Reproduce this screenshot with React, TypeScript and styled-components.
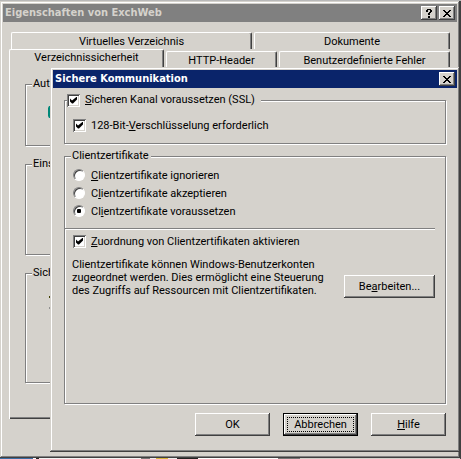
import React from "react";
import styled, { createGlobalStyle, css } from "styled-components";

const face = "#d5d2cc";
const shade = "#808080";
const dark = "#404040";

const raised = css`
  box-shadow: inset -1px -1px ${dark}, inset 1px 1px #fff, inset -2px -2px ${shade};
`;

const windowFrame = css`
  background: ${face};
  padding: 3px;
  box-shadow: inset -1px -1px ${dark}, inset 1px 1px ${face},
    inset -2px -2px ${shade}, inset 2px 2px #fff;
`;

const GlobalStyle = createGlobalStyle`
  *, *::before, *::after { box-sizing: border-box; }
  body { margin: 0; }
  body, button {
    font-family: Roboto, "DejaVu Sans Condensed", sans-serif;
    font-size: 11px;
    line-height: 13px;
    color: #000;
  }
`;

const Desktop = styled.div`
  position: relative;
  min-height: 100vh;
  display: flex;
  flex-direction: column;
  padding: 1px 1px 0 0;
  background: linear-gradient(to bottom, #b8b8b8 1px, ${dark} 1px);
`;

const Taskbar = styled.div`
  height: 1px;
  background: linear-gradient(
    to right,
    #3a6ea5 33px, #fff 33px 36px, #222 36px 39px, #f4f4f4 39px 141px,
    #777 141px 150px, #eee 150px 156px, #d8b53a 156px 168px, #eee 168px 177px,
    #222 177px 198px, #fff 198px 278px, #777 278px 300px, ${face} 300px
  );
`;

const PropertyWindow = styled.main`
  ${windowFrame}
  flex: 1;
  display: flex;
  flex-direction: column;
`;

const Dialog = styled.section`
  ${windowFrame}
  position: absolute;
  top: 67px;
  left: 50px;
  right: 1px;
  bottom: 7px;
  display: flex;
  flex-direction: column;
`;

const TitleBar = styled.header<{ $active?: boolean }>`
  height: 18px;
  flex: none;
  display: flex;
  align-items: center;
  gap: 2px;
  padding: 0 2px;
  background: ${(p) => (p.$active ? "#0a246a" : shade)};
  color: ${(p) => (p.$active ? "#fff" : face)};
`;

const Title = styled.h1`
  flex: 1;
  margin: 0;
  font: bold 11px/14px "DejaVu Sans Condensed", sans-serif;
`;

const CaptionButton = styled.button`
  ${raised}
  width: 16px;
  height: 14px;
  padding: 0;
  border: 0;
  background: ${face};
  display: grid;
  place-items: center;
`;

const TabRow = styled.div<{ $front?: boolean }>`
  display: grid;
  flex: none;
  gap: 2px;
  align-items: end;
  height: 18px;
  margin: ${(p) => (p.$front ? "0 7px 0 6px" : "9px 7px 0 8px")};
  grid-template-columns: ${(p) => (p.$front ? "155fr 111fr 171fr" : "241fr 196fr")};
`;

const Tab = styled.button<{ $selected?: boolean }>`
  height: ${(p) => (p.$selected ? 19 : 17)}px;
  padding: 0 0 ${(p) => (p.$selected ? 3 : 0)}px;
  border: 0;
  border-top: 1px solid #fff;
  border-left: 1px solid #fff;
  border-right: 1px solid ${dark};
  border-radius: 2px 2px 0 0;
  box-shadow: inset -1px 0 ${shade};
  background: ${face};
`;

const TabPanel = styled.div`
  flex: 1;
  display: flex;
  flex-direction: column;
  gap: 11px;
  margin: 0 7px 36px 6px;
  padding: 10px 16px 36px 15px;
  border-left: 1px solid #fff;
  box-shadow: inset -1px -1px ${dark}, inset -2px -2px ${shade};
`;

const GroupBox = styled.fieldset<{ $pad?: string; $grow?: boolean }>`
  display: flex;
  flex-direction: column;
  flex: ${(p) => (p.$grow ? "1 1 auto" : "none")};
  min-width: 0;
  margin: 0;
  padding: ${(p) => p.$pad ?? "0"};
  border: 1px solid ${shade};
  box-shadow: 1px 1px #fff, inset 1px 1px #fff;
`;

const Legend = styled.legend`
  height: 14px;
  line-height: 14px;
  margin-left: 6px;
  padding: 0 2px 0 1px;
  background: ${face};
`;

const CheckLegend = styled(Legend)`
  margin-left: 2px;
  padding: 0 6px 0 0;
`;

const SideContent = styled.div<{ $height: number }>`
  height: ${(p) => p.$height}px;
  padding: 15px 0 0 22px;
`;

const Choice = styled.label<{ $tall?: boolean }>`
  display: flex;
  align-items: center;
  gap: 5px;
  height: ${(p) => (p.$tall ? 18 : 14)}px;
`;

const CheckBox = styled.input.attrs({ type: "checkbox" })`
  appearance: none;
  width: 13px;
  height: 13px;
  margin: 0;
  display: grid;
  place-items: center;
  background: #fff;
  box-shadow: inset 1px 1px ${shade}, inset -1px -1px #fff,
    inset 2px 2px ${dark}, inset -2px -2px ${face};

  &:checked::after {
    content: "";
    width: 7px;
    height: 7px;
    background: #000;
    clip-path: polygon(0 2px, 2px 4px, 7px 0, 7px 3px, 3px 7px, 2px 7px, 0 5px);
  }
`;

const Radio = styled.input.attrs({ type: "radio" })`
  appearance: none;
  width: 12px;
  height: 12px;
  margin: 0 1px 0 0;
  display: grid;
  place-items: center;
  border: 1px solid;
  border-color: ${shade} #fff #fff ${shade};
  border-radius: 50%;
  background: #fff;
  box-shadow: inset 1px 1px ${dark};

  &:checked::after {
    content: "";
    width: 4px;
    height: 4px;
    border-radius: 1px;
    background: #000;
  }
`;

const DialogBody = styled.form`
  flex: 1;
  display: flex;
  flex-direction: column;
  gap: 5px;
  padding: 5px 11px 13px;
`;

const Divider = styled.hr`
  width: calc(100% - 2px);
  height: 2px;
  margin: 8px 0 4px;
  border: 0;
  border-top: 1px solid ${shade};
  border-bottom: 1px solid #fff;
`;

const Indent = styled.div`
  padding-left: 8px;
`;

const MappingRow = styled.div`
  display: flex;
  justify-content: space-between;
  align-items: flex-start;
  padding: 10px 2px 0 7px;
`;

const Description = styled.p`
  width: 260px;
  margin: 0;
`;

const PushButton = styled.button<{ $wide?: boolean; $default?: boolean }>`
  ${raised}
  width: ${(p) => (p.$wide ? 91 : 75)}px;
  height: 23px;
  padding: 0;
  border: 0;
  background: ${face};
  ${(p) =>
    p.$default &&
    css`
      display: flex;
      border: 1px solid #000;
      padding: 3px;
    `}
`;

const EditButton = styled(PushButton)`
  margin-top: 17px;
`;

const FocusFrame = styled.span`
  flex: 1;
  align-self: stretch;
  display: grid;
  place-items: center;
  border: 1px dotted #000;
`;

const Footer = styled.footer`
  display: flex;
  justify-content: flex-end;
  gap: 13px;
  padding-top: 4px;
`;

const Key = styled.span`
  text-decoration: underline;
  text-underline-offset: 1px;
  text-decoration-thickness: 1px;
`;

const CloseIcon = () => (
  <svg width="8" height="7" viewBox="0 0 8 7" shapeRendering="crispEdges" aria-hidden="true">
    <path d="M0 0h2v1h1v1h2v-1h1v-1h2v1h-1v1h-1v1h-1v1h1v1h1v1h1v1h-2v-1h-1v-1h-2v1h-1v1h-2v-1h1v-1h1v-1h1v-1h-1v-1h-1v-1h-1z" />
  </svg>
);

const HelpIcon = () => (
  <svg width="6" height="9" viewBox="0 0 6 9" shapeRendering="crispEdges" aria-hidden="true">
    <path d="M1 0h4v1h1v2h-1v1h-1v2h-2v-2h1v-1h1v-2h-2v2h-2v-2h1zM2 7h2v2h-2z" />
  </svg>
);

const AuthIcon = () => (
  <svg width="10" height="12" viewBox="0 0 10 12" aria-hidden="true">
    <path d="M1 0h9v12H1L0 10V2z" fill="#008878" />
  </svg>
);

const CertificateIcon = () => (
  <svg width="10" height="16" viewBox="0 0 10 16" aria-hidden="true">
    <path d="M3 0L1 2l2 2" fill="#ffff80" stroke="#404000" />
    <path d="M3 11l-2 2 2 2" fill="none" stroke="#909090" />
  </svg>
);

export default function App() {
  return (
    <>
      <GlobalStyle />
      <Desktop>
        <PropertyWindow>
          <TitleBar>
            <Title>Eigenschaften von ExchWeb</Title>
            <CaptionButton type="button" aria-label="Hilfe"><HelpIcon /></CaptionButton>
            <CaptionButton type="button" aria-label="Schließen"><CloseIcon /></CaptionButton>
          </TitleBar>
          <TabRow>
            <Tab type="button">Virtuelles Verzeichnis</Tab>
            <Tab type="button">Dokumente</Tab>
          </TabRow>
          <TabRow $front>
            <Tab type="button" $selected>Verzeichnissicherheit</Tab>
            <Tab type="button">HTTP-Header</Tab>
            <Tab type="button">Benutzerdefinierte Fehler</Tab>
          </TabRow>
          <TabPanel>
            <GroupBox>
              <Legend>Aut</Legend>
              <SideContent $height={54}><AuthIcon /></SideContent>
            </GroupBox>
            <GroupBox>
              <Legend>Eins</Legend>
              <SideContent $height={83} />
            </GroupBox>
            <GroupBox $grow>
              <Legend>Sich</Legend>
              <SideContent $height={90}><CertificateIcon /></SideContent>
            </GroupBox>
          </TabPanel>
        </PropertyWindow>
        <Taskbar />

        <Dialog role="dialog" aria-labelledby="dialog-title">
          <TitleBar $active>
            <Title as="h2" id="dialog-title">Sichere Kommunikation</Title>
            <CaptionButton type="button" aria-label="Schließen"><CloseIcon /></CaptionButton>
          </TitleBar>
          <DialogBody>
            <GroupBox $pad="11px 0">
              <CheckLegend>
                <Choice><CheckBox defaultChecked /><span><Key>S</Key>icheren Kanal voraussetzen (SSL)</span></Choice>
              </CheckLegend>
              <Indent>
                <Choice><CheckBox defaultChecked /><span>128-Bit-<Key>V</Key>erschlüsselung erforderlich</span></Choice>
              </Indent>
            </GroupBox>
            <GroupBox $grow $pad="3px 8px 11px 0">
              <Legend>Clientzertifikate</Legend>
              <Indent>
                <Choice $tall><Radio name="certificates" /><span><Key>C</Key>lientzertifikate ignorieren</span></Choice>
                <Choice $tall><Radio name="certificates" /><span>C<Key>l</Key>ientzertifikate akzeptieren</span></Choice>
                <Choice $tall><Radio name="certificates" defaultChecked /><span>Cl<Key>i</Key>entzertifikate voraussetzen</span></Choice>
              </Indent>
              <Divider />
              <Indent>
                <Choice><CheckBox defaultChecked /><span><Key>Z</Key>uordnung von Clientzertifikaten aktivieren</span></Choice>
              </Indent>
              <MappingRow>
                <Description>
                  Clientzertifikate können Windows-Benutzerkonten zugeordnet werden. Dies
                  ermöglicht eine Steuerung des Zugriffs auf Ressourcen mit Clientzertifikaten.
                </Description>
                <EditButton type="button" $wide>Be<Key>a</Key>rbeiten...</EditButton>
              </MappingRow>
            </GroupBox>
            <Footer>
              <PushButton type="button">OK</PushButton>
              <PushButton type="button" $default><FocusFrame>Abbrechen</FocusFrame></PushButton>
              <PushButton type="button"><span><Key>H</Key>ilfe</span></PushButton>
            </Footer>
          </DialogBody>
        </Dialog>
      </Desktop>
    </>
  );
}
